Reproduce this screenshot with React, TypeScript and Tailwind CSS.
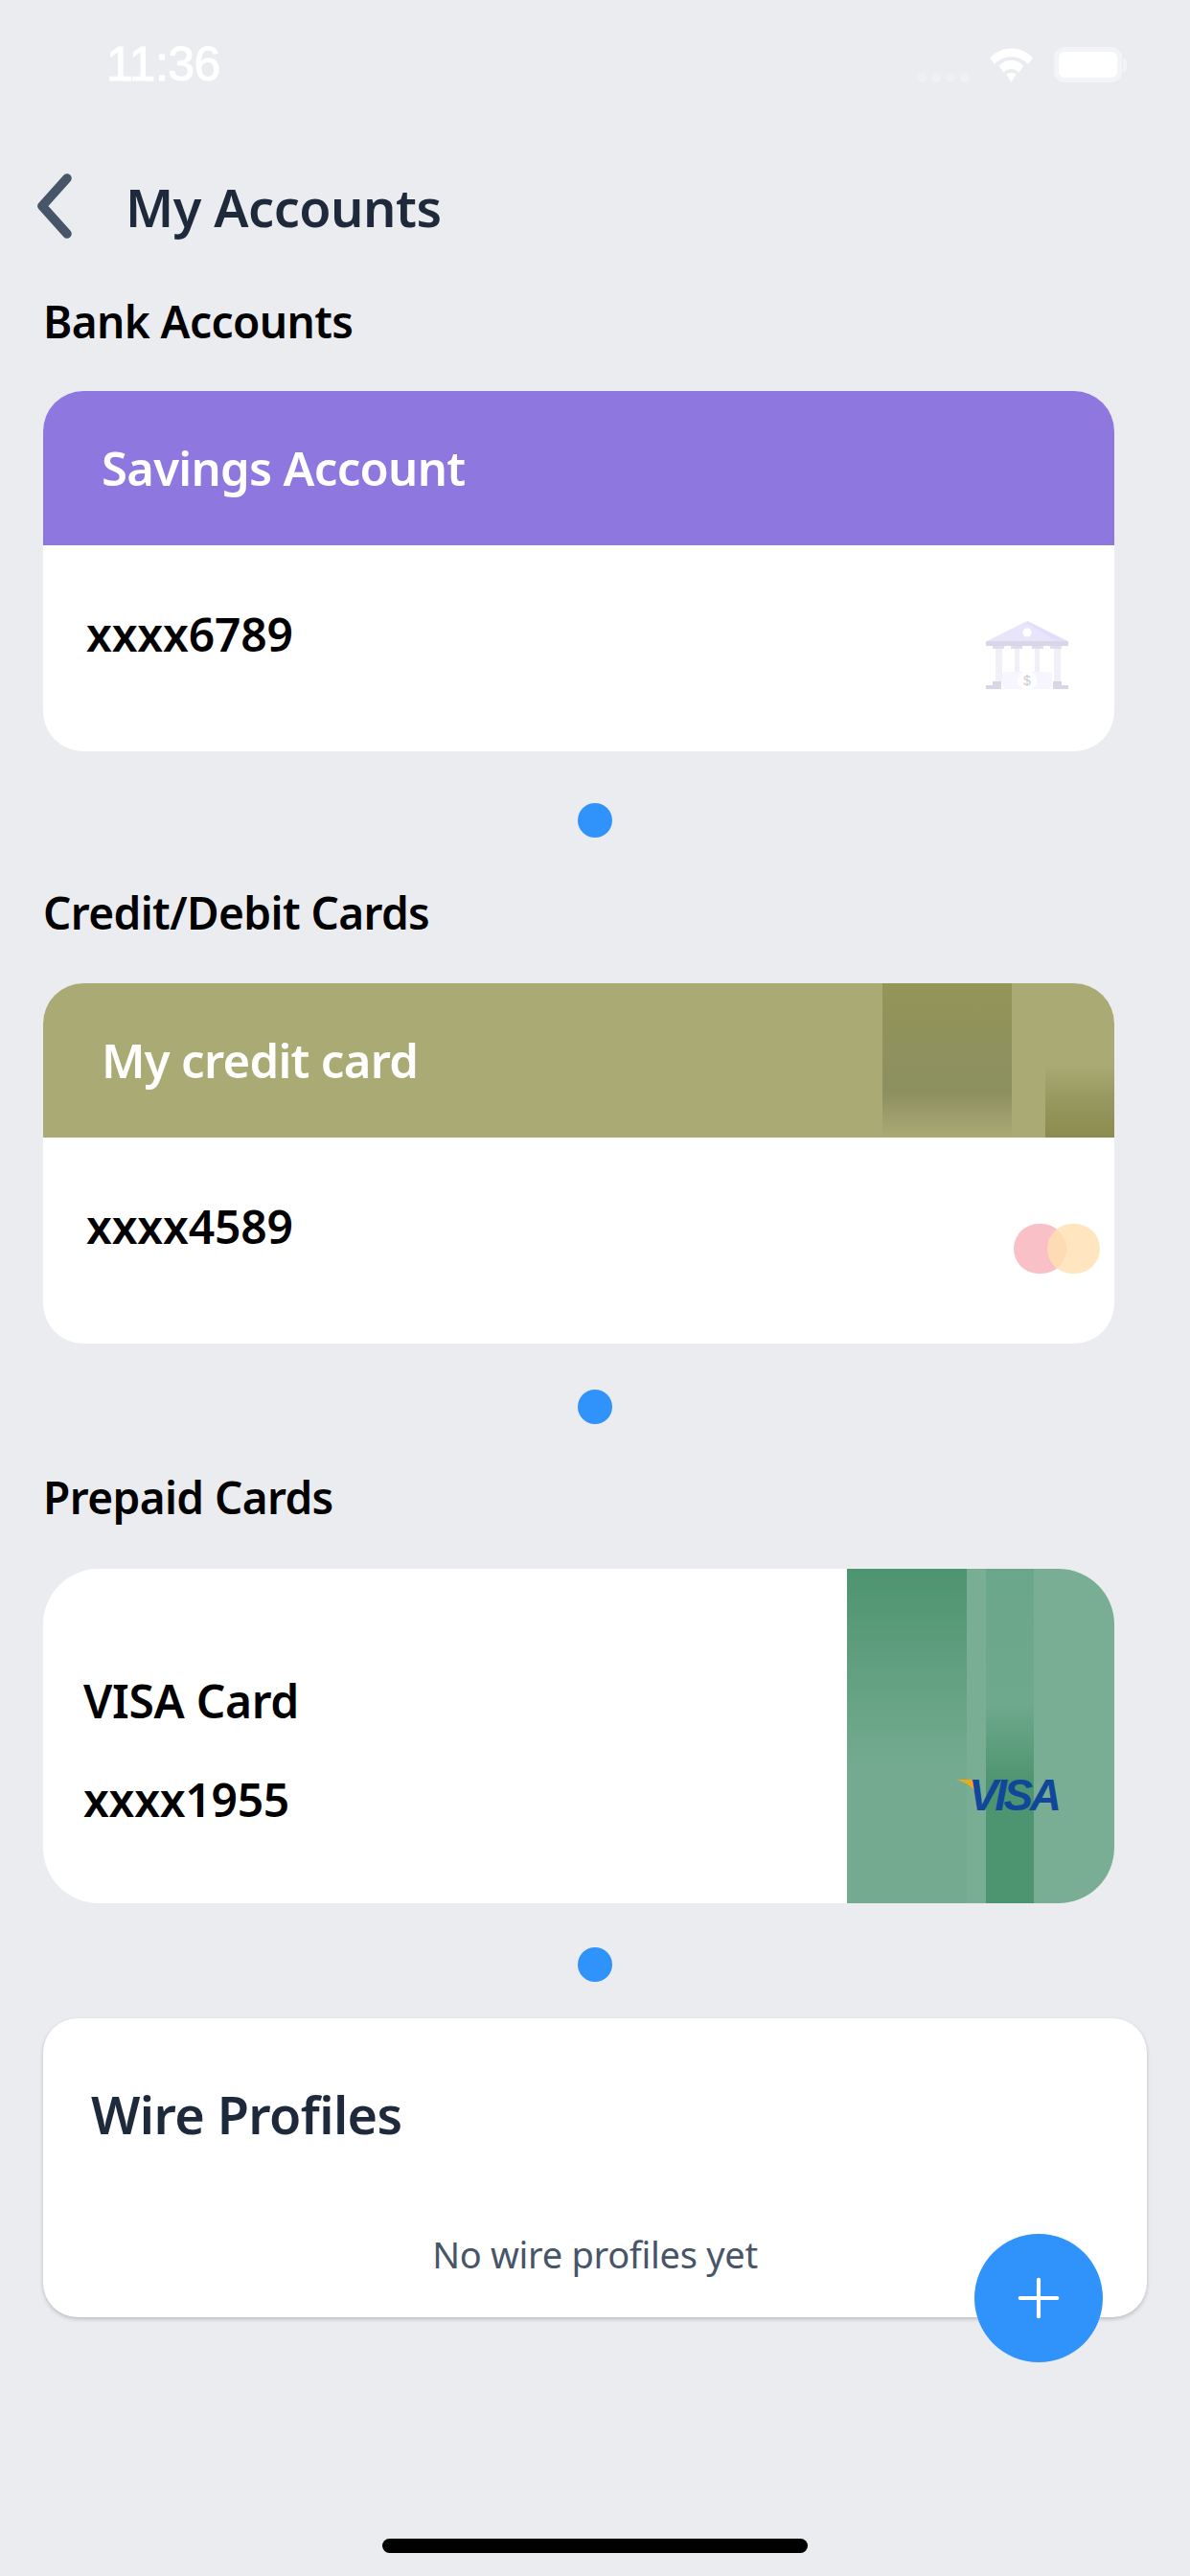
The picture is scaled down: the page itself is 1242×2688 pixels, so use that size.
import React from "react";
import { Plus } from "lucide-react";

const font = "font-['Noto_Sans',sans-serif]";

function Wifi() {
  return (
    <svg width="47" height="36" viewBox="0 0 48 36" fill="#fff">
      <path d="M24 0C15 0 7 4 1 10l5 7c5-5 11-8 18-8s13 3 18 8l5-7C41 4 33 0 24 0z" />
      <path d="M24 13c-5 0-10 2-13 6l5 7c2-3 5-4 8-4s6 1 8 4l5-7c-3-4-8-6-13-6z" />
      <path d="M24 26c-2 0-4 1-5 2l5 8 5-8c-1-1-3-2-5-2z" />
    </svg>
  );
}

function StatusBar() {
  return (
    <div className="h-[150px] flex items-start justify-between pt-[41px] pl-[111px] pr-[66px]">
      <span className="font-['Liberation_Sans',sans-serif] text-[50px] leading-[52px] text-white [-webkit-text-stroke:1px_#ffffff] tracking-[-0.5px]">11:36</span>
      <div className="flex items-end h-[37px] mt-[8px]">
        <div className="flex gap-[5px] mb-[0px] opacity-25">
          <span className="w-[10px] h-[10px] rounded-full bg-white" />
          <span className="w-[10px] h-[10px] rounded-full bg-white" />
          <span className="w-[10px] h-[10px] rounded-full bg-white" />
          <span className="w-[10px] h-[10px] rounded-full bg-white" />
        </div>
        <div className="ml-[20px] mr-[21px]">
          <Wifi />
        </div>
        <div className="w-[71px] h-[37px] rounded-[11px] border-[5px] border-[#f3f4f7] bg-white" />
        <div className="w-[4px] h-[14px] mb-[11px] ml-[1px] rounded-r-full bg-[#f3f4f7]" />
      </div>
    </div>
  );
}

function BankIcon() {
  return (
    <svg width="88" height="72" viewBox="0 0 88 72" className="absolute right-[47px] top-[79px]">
      <path d="M44 0 L86 21 L2 21 Z" fill="#e8e5fa" />
      <path d="M44 0 L86 21 L74 21 L44 2 Z" fill="#e3ddfc" />
      <circle cx="44" cy="12" r="4.5" fill="#fff" />
      <rect x="1" y="21" width="86" height="5" rx="1" fill="#d9d6e8" />
      <rect x="8" y="26" width="12" height="3" fill="#e0deeb" />
      <rect x="27" y="26" width="12" height="3" fill="#e0deeb" />
      <rect x="49" y="26" width="12" height="3" fill="#e0deeb" />
      <rect x="68" y="26" width="12" height="3" fill="#e0deeb" />
      <rect x="11" y="29" width="7" height="34" fill="#f1f0f8" />
      <rect x="31" y="29" width="5" height="24" fill="#f1f0f8" />
      <rect x="52" y="29" width="5" height="24" fill="#f1f0f8" />
      <rect x="72" y="29" width="7" height="34" fill="#f1f0f8" />
      <path d="M1 67 H8 V63 H17 V71 H1 Z" fill="#d9d6e8" />
      <path d="M87 67 H80 V63 H71 V71 H87 Z" fill="#d9d6e8" />
      <path d="M20 53 H68 L70 56 V67 L68 71 H20 L18 67 V56 Z" fill="#f7f5ff" />
      <circle cx="44" cy="62" r="10" fill="#fff" />
      <text x="44" y="67" textAnchor="middle" fontSize="14" fill="#cbc8da" fontFamily="Liberation Sans, sans-serif">$</text>
    </svg>
  );
}

function SectionLabel({ children, className }: { children: React.ReactNode; className: string }) {
  return <div className={`h-[64px] flex items-center text-[46px] font-semibold tracking-[-0.6px] text-black ${className}`}>{children}</div>;
}

function Dot({ className }: { className: string }) {
  return <div className={`mx-auto w-[36px] h-[36px] rounded-full bg-[#3093fb] ${className}`} />;
}

function AccountCard({ title, number, header, children, numberIcon }: { title: string; number: string; header: string; children?: React.ReactNode; numberIcon?: React.ReactNode }) {
  return (
    <div className="relative h-[376px] mr-[34px] rounded-[42px] bg-white overflow-hidden">
      <div className={`relative h-[161px] flex items-center pl-[61px] overflow-hidden ${header}`}>
        {children}
        <span className="relative text-[49px] font-semibold tracking-[-0.7px] text-white">{title}</span>
      </div>
      <div className="relative pl-[45px] pt-[58px] h-[215px]">
        <div className="text-[48px] leading-[70px] font-semibold tracking-[-0.2px] text-black">{number}</div>
        {numberIcon}
      </div>
    </div>
  );
}

export default function App() {
  return (
    <div className={`${font} relative w-[1242px] h-[2688px] bg-[#ebecf0] overflow-hidden`}>
      <StatusBar />

      <div className="h-[132px] flex items-center">
        <svg width="44" height="72" viewBox="0 0 44 72" className="ml-[35px] mb-[2px] shrink-0" fill="none" stroke="#475569" strokeWidth="9.5" strokeLinecap="round" strokeLinejoin="round">
          <polyline points="35,7 9,36 35,65" />
        </svg>
        <h1 className="ml-[52px] text-[54px] font-semibold tracking-[-0.5px] text-[#1e293b] leading-none">My Accounts</h1>
      </div>

      <div className="pl-[45px] pr-[45px]">
        <SectionLabel className="mt-[21px] mb-[41px]">Bank Accounts</SectionLabel>
        <AccountCard title="Savings Account" number="xxxx6789" header="bg-[#8e77df]" numberIcon={<BankIcon />} />
        <Dot className="mt-[54px]" />

        <SectionLabel className="mt-[46px] mb-[42px]">Credit/Debit Cards</SectionLabel>
        <AccountCard
          title="My credit card"
          number="xxxx4589"
          header="bg-[#aaaa74]"
          numberIcon={
            <div className="absolute right-[15px] top-[90px] flex">
              <span className="w-[55px] h-[52px] rounded-full bg-[#fac0c8]" />
              <span className="w-[55px] h-[52px] rounded-full bg-[#ffe0b0]/80 -ml-[20px]" />
            </div>
          }
        >
          <div className="absolute left-[876px] top-0 w-[135px] h-full bg-gradient-to-b from-[#949558] via-[#8c8f60] via-70% to-[#aaaa74]" />
          <div className="absolute right-0 bottom-0 w-[72px] h-[77px] bg-gradient-to-b from-[#aaaa74] via-[#97985f] to-[#8c8b4f]" />
        </AccountCard>
        <Dot className="mt-[48px]" />

        <SectionLabel className="mt-[44px] mb-[43px]">Prepaid Cards</SectionLabel>
        <div className="relative h-[349px] mr-[34px] rounded-[58px] bg-white overflow-hidden flex">
          <div className="flex-1 pl-[42px] pt-[103px] text-[48px] font-semibold tracking-[-0.3px] text-black">
            <div className="leading-[70px]">VISA Card</div>
            <div className="mt-[33px] leading-[70px]">xxxx1955</div>
          </div>
          <div className="relative w-[279px] h-full bg-[#79ae94] flex">
            <div className="w-[125px] h-full bg-gradient-to-b from-[#4d9470] via-[#74ab90] via-60% to-[#74ab90]" />
            <div className="w-[20px] h-full bg-[#79ae94]" />
            <div className="w-[50px] h-full bg-gradient-to-b from-[#6aa68a] via-[#6fa98d] via-40% to-[#4d9470] to-[64%]" />
            <div className="absolute left-[114px] top-[220px] flex items-start">
              <svg width="24" height="16" viewBox="0 0 24 16" className="-mr-[11px]">
                <path d="M0 0 H16 Q19 1 20 4 L22 15 Q15 4 0 0 Z" fill="#eeaa14" />
              </svg>
              <span className="font-['Liberation_Sans',sans-serif] text-[46px] leading-[33px] font-bold italic text-[#10479a] tracking-[-3.5px]">VISA</span>
            </div>
          </div>
        </div>
        <Dot className="mt-[46px]" />

        <div className="mt-[38px] h-[312px] rounded-[36px] bg-white shadow-[0_2px_4px_rgba(0,0,0,0.2)] pt-[58px]">
          <h2 className="pl-[50px] text-[54px] font-semibold tracking-[-0.6px] text-[#1e293b] leading-[84px]">Wire Profiles</h2>
          <p className="mt-[78px] text-center text-[38px] tracking-[-0.3px] text-[#475569] leading-[52px]">No wire profiles yet</p>
        </div>
      </div>

      <button className="absolute left-[1017px] top-[2331px] w-[134px] h-[134px] rounded-full bg-[#3093fb] flex items-center justify-center">
        <Plus size={66} strokeWidth={1.5} className="text-white" />
      </button>

      <div className="absolute left-[399px] top-[2649px] w-[444px] h-[15px] rounded-full bg-black" />
    </div>
  );
}
